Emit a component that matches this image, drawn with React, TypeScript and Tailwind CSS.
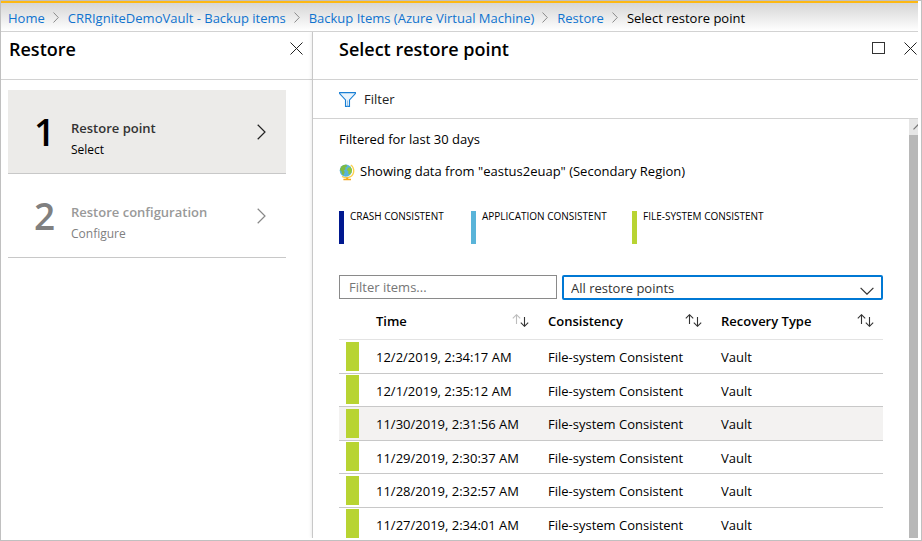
import React from "react";

type IconProps = { className?: string };

function ChevronRight({ className = "" }: IconProps) {
  return (
    <svg viewBox="0 0 9 16" className={className} fill="none" stroke="currentColor" strokeWidth="1.2" aria-hidden="true">
      <path d="M0.7 0.8 L8 8 L0.7 15.2" />
    </svg>
  );
}

function CrumbSeparator() {
  return (
    <svg viewBox="0 0 6 11" className="h-[11px] w-[6px] shrink-0 text-[#8a8a8a]" fill="none" stroke="currentColor" strokeWidth="1" aria-hidden="true">
      <path d="M0.5 0.5 L5.3 5.5 L0.5 10.5" />
    </svg>
  );
}

function CloseIcon() {
  return (
    <svg viewBox="0 0 13 13" className="h-[13px] w-[13px]" fill="none" stroke="#222" strokeWidth="1" aria-hidden="true">
      <path d="M0.5 0.5 L12.5 12.5 M12.5 0.5 L0.5 12.5" />
    </svg>
  );
}

function MaximizeIcon() {
  return (
    <svg viewBox="0 0 13 13" className="h-[13px] w-[13px]" fill="none" stroke="#333" strokeWidth="1" aria-hidden="true">
      <rect x="0.5" y="0.5" width="12" height="11" />
    </svg>
  );
}

function FunnelIcon() {
  return (
    <svg viewBox="0 0 17 15" className="h-[15px] w-[17px]" fill="#eaf4fc" stroke="#1a7fd4" strokeWidth="1.1" aria-hidden="true">
      <path d="M0.6 0.6 H16.4 V1.6 L10.5 8 V14.4 H6.5 V8 L0.6 1.6 Z" />
      <path d="M8.5 8.5 V14.4" stroke="#7db8e8" strokeWidth="0.8" />
    </svg>
  );
}

function GlobeIcon() {
  return (
    <svg viewBox="0 0 16 17" className="mt-[2px] h-[17px] w-[16px] shrink-0" fill="none" aria-hidden="true">
      <path d="M11.8 1 C15.8 3.8 15.8 10.8 11 12.8 C8.6 14 5.4 13.8 3 12.4" stroke="#fcd04b" strokeWidth="1.4" />
      <circle cx="6.8" cy="6.6" r="6.1" fill="#59b4d9" />
      <path d="M2 3 C3.6 0.9 6 0.4 7.6 0.8 L8 2.6 L6.2 3.6 L6.6 5.2 L4.6 6.4 L5.8 8 L4.6 11 L3 10.4 L2.6 7.6 L0.9 6 Z" fill="#7fba42" />
      <path d="M9 3.8 L11.6 3 L13 5.4 L12.6 8.4 L10.6 10.6 L9.2 9.4 L9.4 7.2 L7.8 6 Z" fill="#8cc63f" />
      <path d="M7.2 13.4 H9.2 V14.8 H12 V16.2 H4.4 V14.8 H7.2 Z" fill="#f5a81c" />
    </svg>
  );
}

function SortIcon({ descending = false }: { descending?: boolean }) {
  return (
    <svg viewBox="0 0 17 13" className="h-[13px] w-[17px] shrink-0" fill="none" strokeWidth="1.1" aria-hidden="true">
      <path d="M4.5 10 V0.8 M0.8 4.4 L4.5 0.7 L8.2 4.4" stroke={descending ? "#bdbdbd" : "#333"} />
      <path d="M12.5 3 V12.2 M8.8 8.6 L12.5 12.3 L16.2 8.6" stroke="#333" />
    </svg>
  );
}

const crumbs = ["Home", "CRRIgniteDemoVault - Backup items", "Backup Items (Azure Virtual Machine)", "Restore"];

const steps = [
  { title: "Restore point", action: "Select", active: true },
  { title: "Restore configuration", action: "Configure", active: false },
];

const legend = [
  { label: "CRASH CONSISTENT", color: "bg-[#00188f]" },
  { label: "APPLICATION CONSISTENT", color: "bg-[#59b4d9]" },
  { label: "FILE-SYSTEM CONSISTENT", color: "bg-[#b8d432]" },
];

const restorePoints = [
  "12/2/2019, 2:34:17 AM",
  "12/1/2019, 2:35:12 AM",
  "11/30/2019, 2:31:56 AM",
  "11/29/2019, 2:30:37 AM",
  "11/28/2019, 2:32:57 AM",
  "11/27/2019, 2:34:01 AM",
];

const columns = [
  { name: "Time", descending: true, padding: "pr-[19px]" },
  { name: "Consistency", descending: false, padding: "pr-[19px]" },
  { name: "Recovery Type", descending: false, padding: "pr-[9px]" },
];

function Breadcrumb() {
  return (
    <nav aria-label="Breadcrumb" className="border-t-2 border-b border-t-[#fdb813] border-b-[#d2d2d2] bg-linear-to-b from-[#d6d6d6] to-white">
      <ol className="flex h-[28px] items-center gap-[9px] pt-px pl-[7px] whitespace-nowrap">
        {crumbs.map((crumb) => (
          <li key={crumb} className="flex items-center gap-2">
            <a href="#" className="text-[#0f73cf]">{crumb}</a>
            <CrumbSeparator />
          </li>
        ))}
        <li aria-current="page">Select restore point</li>
      </ol>
    </nav>
  );
}

function StepsBlade() {
  return (
    <section className="flex w-[311px] shrink-0 flex-col">
      <header className="flex h-[48px] items-start justify-between border-b border-[#d2d2d2] pt-[5px] pr-[9px] pl-2">
        <h2 className="text-[18px] leading-6 font-semibold">Restore</h2>
        <button type="button" aria-label="Close Restore" className="pt-[5px]">
          <CloseIcon />
        </button>
      </header>
      <ol className="pt-[10px] pr-[26px] pl-[7px]">
        {steps.map((step, index) => (
          <li key={step.title}>
            <button
              type="button"
              className={`flex h-[84px] w-full items-center border-b border-[#c8c8c8] pr-5 pl-[26px] text-left ${
                step.active ? "bg-[#ecebe9] text-black" : "text-[#808080]"
              }`}
            >
              <span className="w-[37px] text-[37px] leading-10 font-semibold">{index + 1}</span>
              <span className="flex flex-1 flex-col pt-[14px] leading-[21px]">
                <span className={`font-semibold ${step.active ? "text-[#333]" : "text-[#999]"}`}>{step.title}</span>
                <span className="text-[12px]">{step.action}</span>
              </span>
              <ChevronRight className={`h-4 w-[9px] ${step.active ? "text-[#222]" : "text-[#888]"}`} />
            </button>
          </li>
        ))}
      </ol>
    </section>
  );
}

function RestoreTable() {
  return (
    <table className="mt-[6px] h-[235px] w-full table-fixed border-separate border-spacing-0 text-left">
      <colgroup>
        <col className="w-[37px]" />
        <col className="w-[172px]" />
        <col className="w-[173px]" />
        <col />
      </colgroup>
      <thead>
        <tr className="h-[34px]">
          <td className="border-b border-[#e3e3e3]" />
          {columns.map((column) => (
            <th key={column.name} scope="col" className="h-[34px] border-b border-[#e3e3e3] pb-1 font-semibold">
              <button type="button" className={`flex w-full items-center justify-between ${column.padding}`}>
                {column.name}
                <SortIcon descending={column.descending} />
              </button>
            </th>
          ))}
        </tr>
      </thead>
      <tbody>
        {restorePoints.map((time, index) => (
          <tr key={time} className={index === 2 ? "bg-[#f3f2f1]" : ""}>
            <td className="border-b border-[#c8c8c8] pl-[7px]">
              <div className="h-[29px] w-[13px] bg-[#b8d432]" />
            </td>
            <td className="border-b border-[#c8c8c8] pt-[2px]">{time}</td>
            <td className="border-b border-[#c8c8c8] pt-[2px]">File-system Consistent</td>
            <td className="border-b border-[#c8c8c8] pt-[2px]">Vault</td>
          </tr>
        ))}
      </tbody>
    </table>
  );
}

function RestorePointBlade() {
  return (
    <section className="flex min-w-0 flex-1 flex-col border-l border-[#c8c8c8] shadow-[0_0_4px_rgba(0,0,0,0.12)]">
      <header className="flex h-[48px] shrink-0 items-start justify-between border-b border-[#d2d2d2] pt-[5px] pr-px pl-[26px]">
        <h2 className="text-[18px] leading-6 font-semibold">Select restore point</h2>
        <div className="flex gap-[19px] pt-[5px]">
          <button type="button" aria-label="Maximize">
            <MaximizeIcon />
          </button>
          <button type="button" aria-label="Close Select restore point">
            <CloseIcon />
          </button>
        </div>
      </header>
      <div className="flex h-[39px] shrink-0 items-center border-b border-[#d2d2d2] pl-[26px]">
        <button type="button" className="flex items-center gap-2 text-[#222]">
          <FunnelIcon />
          Filter
        </button>
      </div>
      <div className="flex min-h-0 flex-1">
        <div className="min-w-0 flex-1 overflow-hidden pr-[26px] pl-[26px]">
          <p className="pt-[10px] leading-5">Filtered for last 30 days</p>
          <p className="flex items-center gap-[5px] pt-3 leading-5">
            <GlobeIcon />
            Showing data from &quot;eastus2euap&quot; (Secondary Region)
          </p>
          <ul className="grid grid-cols-[132px_161px_auto] pt-[30px]">
            {legend.map((entry) => (
              <li key={entry.label} className="flex h-[64px] gap-[6px] pb-[31px] text-[10px] leading-[11px] font-medium whitespace-nowrap">
                <span className={`w-[5px] ${entry.color}`} />
                {entry.label}
              </li>
            ))}
          </ul>
          <div className="flex items-start gap-[5px]">
            <input
              type="text"
              aria-label="Filter items"
              placeholder="Filter items..."
              className="h-6 w-[218px] border border-[#8a8a8a] px-[9px] placeholder:text-[#767676]"
            />
            <div className="relative flex-1">
              <select
                aria-label="Restore point type"
                className="h-[25px] w-full appearance-none rounded-[2px] border-2 border-[#0078d4] bg-white px-[7px] text-[#333]"
              >
                <option>All restore points</option>
              </select>
              <svg viewBox="0 0 14 8" className="pointer-events-none absolute right-[9px] bottom-[5px] h-2 w-[14px]" fill="none" stroke="#333" strokeWidth="1.2" aria-hidden="true">
                <path d="M0.6 0.8 L7 7.2 L13.4 0.8" />
              </svg>
            </div>
          </div>
          <RestoreTable />
        </div>
        <div className="w-[9px] shrink-0 overflow-hidden bg-[#b8b8b8]">
          <div className="h-4 bg-[#e6e6e6] pt-[5px] pl-1">
            <svg viewBox="0 0 10 6" className="h-[6px] w-[10px] max-w-none" fill="none" stroke="#777" strokeWidth="1.2" aria-hidden="true">
              <path d="M0.5 5.3 L5 0.8 L9.5 5.3" />
            </svg>
          </div>
        </div>
      </div>
    </section>
  );
}

export default function App() {
  return (
    <div className="flex h-screen flex-col overflow-hidden border border-[#c0c0c0] bg-white pr-[3px] pb-[2px] font-['Open_Sans','Noto_Sans',sans-serif] text-[13px] leading-5 text-black">
      <Breadcrumb />
      <main className="flex min-h-0 flex-1 overflow-hidden">
        <StepsBlade />
        <RestorePointBlade />
      </main>
    </div>
  );
}
